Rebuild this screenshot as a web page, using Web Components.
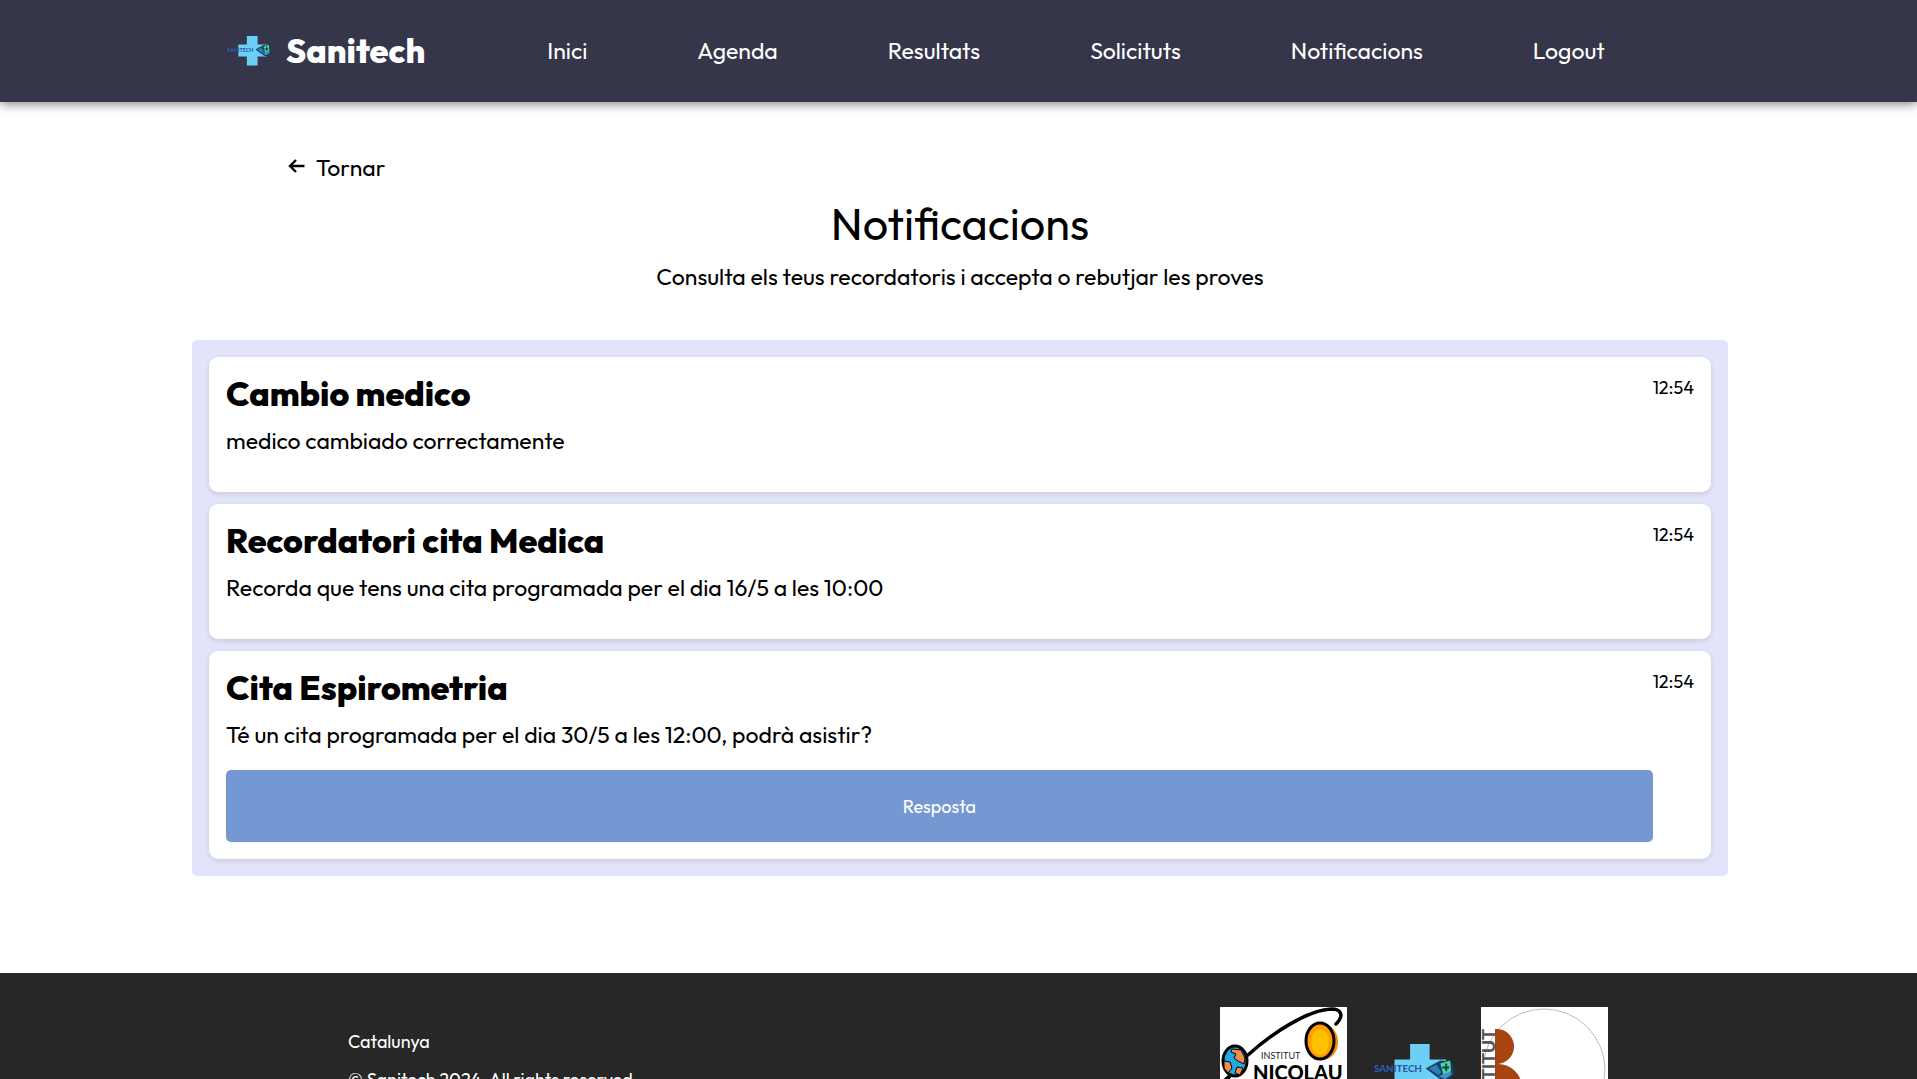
<!DOCTYPE html>
<html lang="ca">
<head>
<meta charset="utf-8">
<meta name="viewport" content="width=device-width, initial-scale=1">
<title>Sanitech - Notificacions</title>
<style>
  body { margin: 0; font-family: Outfit, Lato, sans-serif; font-size: 23px; color: #000; background: #fff; }
</style>
</head>
<body>
<sani-app></sani-app>

<template id="t-app">
  <style>
    :host { display: flex; flex-direction: column; height: 100vh; overflow-y: auto; scrollbar-width: none; }
    sani-header, main, sani-footer { flex: none; }
    main { padding: 49px 189px 97px 192px; }
    .back { display: inline-flex; align-items: center; gap: 10px; margin-left: 96px; color: inherit; text-decoration: none; line-height: 28px; }
    .back svg { width: 18px; height: 16px; margin-bottom: 4px; }
    h1 { margin: 14px 0 0; font-size: 45px; font-weight: 400; line-height: 56px; text-align: center; }
    .lead { margin: 11px 0 49px; line-height: 28px; text-align: center; }
  </style>
  <sani-header></sani-header>
  <main>
    <a class="back" href="#"><svg viewBox="0 0 18 16" fill="none" stroke="#000" stroke-width="2.4" aria-hidden="true"><path d="M8 2 2 8l6 6M2 8h14.500"/></svg>Tornar</a>
    <h1>Notificacions</h1>
    <p class="lead">Consulta els teus recordatoris i accepta o rebutjar les proves</p>
    <notice-list>
      <notice-card heading="Cambio medico" time="12:54">medico cambiado correctamente</notice-card>
      <notice-card heading="Recordatori cita Medica" time="12:54">Recorda que tens una cita programada per el dia 16/5 a les 10:00</notice-card>
      <notice-card heading="Cita Espirometria" time="12:54" action="Resposta">Té un cita programada per el dia 30/5 a les 12:00, podrà asistir?</notice-card>
    </notice-list>
  </main>
  <sani-footer></sani-footer>
</template>

<template id="t-logo">
  <style>
    :host { display: block; }
    svg { display: block; width: 100%; height: auto; }
  </style>
  <svg viewBox="0 0 82 55" role="img" aria-label="Sanitech">
    <path fill="#6dcff6" d="M37 0h20v16h17v22H57v17H37V38H21V16h16z"/>
    <path fill="#123f6b" d="M53 25 68 17l12 1 2 13-7 7-6-1z"/>
    <path fill="#2c7fae" d="m56 25 8-4 5 8-3 3z"/>
    <path fill="#3f8fc4" d="m66 33 12-5 2 3-7 5z"/>
    <path fill="#4fd89a" d="m68 20 10-3 1 11-8 3z"/>
    <path stroke="#123f4b" stroke-width="2" d="M74 20v8M70 24h7"/>
    <text x="0" y="29" font-family="Lato, sans-serif" font-weight="900" font-size="10" fill="#2a5ca8">SANITECH</text>
  </svg>
</template>

<template id="t-header">
  <style>
    :host { display: block; position: relative; background: #36364a; color: #fff; box-shadow: 0 2px 10px rgba(0,0,0,.5); }
    nav { display: flex; align-items: center; min-height: 102px; padding: 0 32px 0 227px; }
    a { color: inherit; text-decoration: none; line-height: 28px; }
    .brand { display: flex; align-items: center; gap: 15px; margin-right: 122px; font-size: 34px; font-weight: 800; line-height: 40px; }
    sani-logo { width: 44px; }
    ul { display: flex; gap: 110px; margin: 0; padding: 0 0 2px; list-style: none; }
  </style>
  <nav>
    <a class="brand" href="#"><sani-logo></sani-logo>Sanitech</a>
    <ul>
      <li><a href="#">Inici</a></li><li><a href="#">Agenda</a></li><li><a href="#">Resultats</a></li>
      <li><a href="#">Solicituts</a></li><li><a href="#">Notificacions</a></li><li><a href="#">Logout</a></li>
    </ul>
  </nav>
</template>

<template id="t-list">
  <style>
    :host { display: flex; flex-direction: column; gap: 12px; padding: 17px; border-radius: 5px; background: #e2e4f9; }
  </style>
  <slot></slot>
</template>

<template id="t-card">
  <style>
    :host { display: flex; padding: 17px; border-radius: 9px; background: #fff; box-shadow: 0 2px 5px rgba(0,0,0,.12); }
    .body { flex: 1; min-height: 101px; }
    h2 { margin: 0; font-size: 34px; font-weight: 800; line-height: 40px; }
    p { margin: 13px 0 0; line-height: 28px; }
    time { font-size: 18px; line-height: 28px; }
    button { display: block; width: 100%; height: 72px; margin-top: 21px; border: 0; border-radius: 5px; background: #7698d2; color: #fff; font: inherit; font-size: 18px; }
  </style>
  <div class="body"><h2></h2><p><slot></slot></p></div>
  <time></time>
</template>

<template id="t-footer">
  <style>
    :host { display: block; background: #272727; color: #fff; font-size: 18px; }
    footer { display: flex; justify-content: space-between; align-items: flex-start; padding: 34px 309px 34px 348px; }
    p { margin: 0 0 14px; line-height: 24px; }
    .text { padding-top: 23px; }
    .logos { display: flex; align-items: center; gap: 27px; }
    .partner { display: block; width: 127px; height: 127px; background: #fff; }
    sani-logo { width: 80px; }
  </style>
  <footer>
    <div class="text"><p>Catalunya</p><p>© Sanitech 2024. All rights reserved.</p></div>
    <div class="logos">
      <svg class="partner" viewBox="0 0 127 127" role="img" aria-label="Institut Nicolau">
        <path fill="none" stroke="#000" stroke-width="3.500" stroke-linecap="round" d="M28 48C52 26 88 3 111 2c11 0 13 7 5 15"/>
        <ellipse cx="105" cy="35" rx="13" ry="17" fill="#f7890f"/>
        <ellipse cx="100" cy="34" rx="14" ry="18" fill="#ff9d00" stroke="#000" stroke-width="3"/>
        <ellipse cx="100" cy="35" rx="9" ry="13" fill="#ffc000"/>
        <ellipse cx="15" cy="54" rx="12" ry="15" fill="#1fa9e1" stroke="#000" stroke-width="3"/>
        <path fill="#f58a4b" stroke="#000" d="m12 42 9 1 4 8-1 6-6-3-4-3 2-4-5-2zM4 54l6 1 2 6-4 5-4-5zM17 60l6 1-3 7-5-2z"/>
        <path stroke="#000" stroke-width="4" d="m2 76 8-7"/>
        <text x="41" y="52" font-family="Lato, sans-serif" font-size="9" fill="#222">INSTITUT</text>
        <text x="33" y="73" font-family="Lato, sans-serif" font-size="20" font-weight="900" fill="#000">NICOLAU</text>
      </svg>
      <sani-logo></sani-logo>
      <svg class="partner" viewBox="0 0 127 127" role="img" aria-label="Institut B">
        <circle cx="63" cy="63" r="61" fill="none" stroke="#bbb"/>
        <path fill="#a84412" d="M14 22a17.500 17.500 0 0 1 3 35 24 24 0 0 1 0 48h-3z"/>
        <text transform="translate(14 103) rotate(-90)" font-family="Liberation Sans, sans-serif" font-size="18" font-weight="700" fill="#555">INSTITUT</text>
      </svg>
    </div>
  </footer>
</template>

<script>
  const define = (name, templateId, setup) => customElements.define(name, class extends HTMLElement {
    constructor() {
      super();
      this.attachShadow({ mode: 'open' }).append(document.getElementById(templateId).content.cloneNode(true));
    }
    connectedCallback() { if (setup) setup(this, this.shadowRoot); }
  });

  define('sani-logo', 't-logo');
  define('sani-header', 't-header');
  define('notice-list', 't-list');
  define('notice-card', 't-card', (host, root) => {
    root.querySelector('h2').textContent = host.getAttribute('heading');
    root.querySelector('time').textContent = host.getAttribute('time');
    const action = host.getAttribute('action');
    if (action && !root.querySelector('button')) {
      const button = document.createElement('button');
      button.type = 'button';
      button.textContent = action;
      root.querySelector('.body').append(button);
    }
  });
  define('sani-footer', 't-footer');
  define('sani-app', 't-app');
</script>
</body>
</html>
